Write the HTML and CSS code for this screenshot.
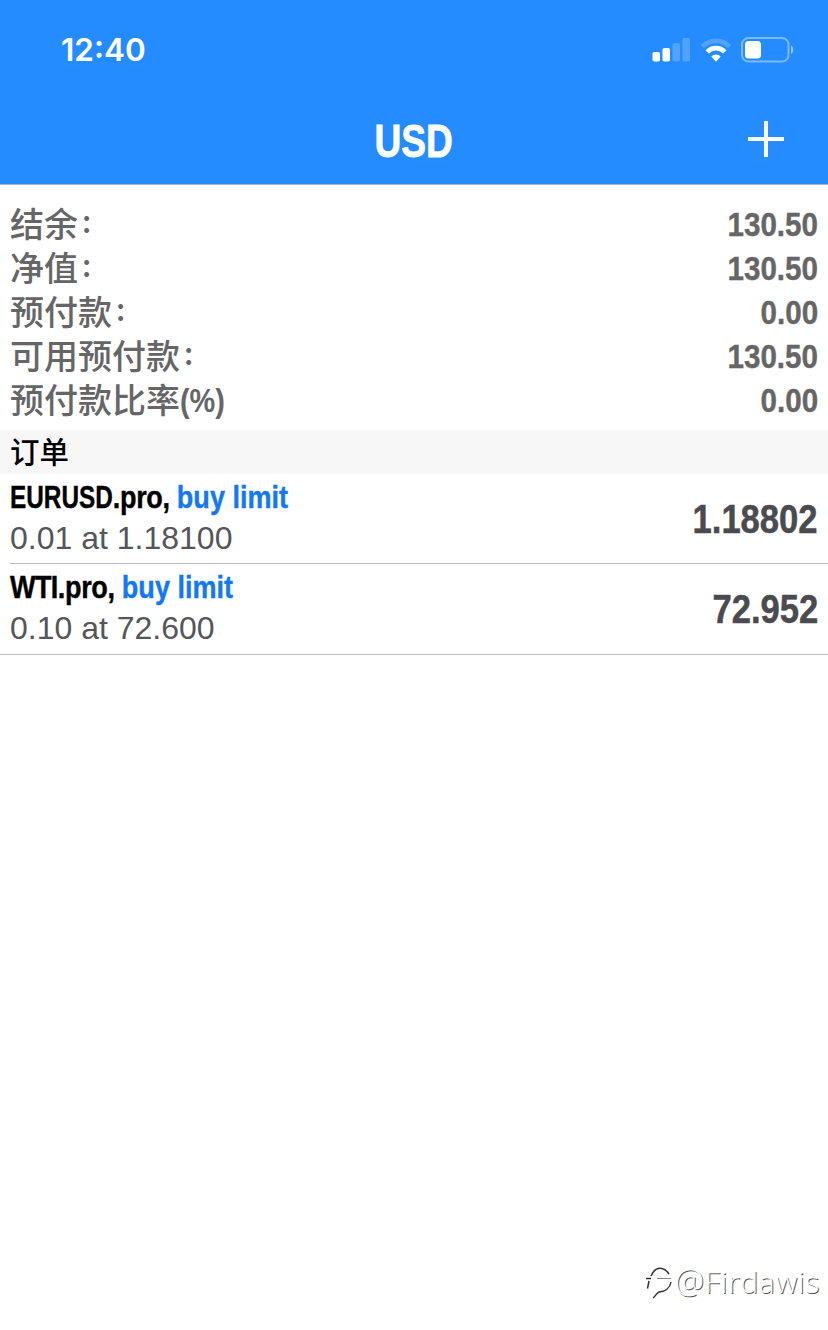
FILE: index.html
```html
<!DOCTYPE html>
<html lang="zh-CN">
<head>
    <meta charset="UTF-8">
    <meta name="viewport" content="width=device-width, initial-scale=1.0">
    <title>USD</title>
    <link rel="stylesheet" href="styles.css">
</head>
<body>
    <header class="header">
        <div class="status-bar">
            <span class="time">12:40</span>
            <div class="status-icons">
                <svg class="signal" width="38" height="24" viewBox="0 0 38 24" fill="#fff">
                    <rect x="0.5" y="14" width="7.5" height="9.5" rx="1.8"/>
                    <rect x="10.5" y="10" width="7.5" height="13.5" rx="1.8"/>
                    <rect x="20.5" y="5" width="7.5" height="18.5" rx="1.8" opacity=".2"/>
                    <rect x="30.5" y="0" width="7.5" height="23.5" rx="1.8" opacity=".2"/>
                </svg>
                <svg class="wifi" width="32" height="26" viewBox="0 0 32 26" fill="none" stroke="#fff">
                    <path d="M2.5 9.5a19 19 0 0 1 27 0" stroke-width="4.6" opacity=".2"/>
                    <path d="M7.2 14.8a12.4 12.4 0 0 1 17.6 0" stroke-width="4.6"/>
                    <path d="M11.3 19.4a6.8 6.8 0 0 1 9.4 0L16 24.8z" fill="#fff" stroke="none"/>
                </svg>
                <svg class="battery" width="54" height="26" viewBox="0 0 54 26">
                    <rect x="1" y="1" width="46.5" height="23.5" rx="6.5" fill="none" stroke="#fff" stroke-width="2" opacity=".4"/>
                    <rect x="4" y="4" width="16" height="17.5" rx="3.5" fill="#fff"/>
                    <path d="M50 8.5c3 1.5 3 7 0 8.5z" fill="#fff" opacity=".5"/>
                </svg>
            </div>
        </div>
        <div class="nav-bar">
            <h1 class="title">USD</h1>
            <svg class="add" width="36" height="36" viewBox="0 0 36 36" stroke="#fff" stroke-width="4">
                <path d="M0 18h36M18 0v36"/>
            </svg>
        </div>
    </header>

    <section class="summary">
        <div class="row"><span class="label">结余<i class="colon">:</i></span><span class="value">130.50</span></div>
        <div class="row"><span class="label">净值<i class="colon">:</i></span><span class="value">130.50</span></div>
        <div class="row"><span class="label">预付款<i class="colon">:</i></span><span class="value">0.00</span></div>
        <div class="row"><span class="label">可用预付款<i class="colon">:</i></span><span class="value">130.50</span></div>
        <div class="row"><span class="label">预付款比率<span class="percent">(%)</span></span><span class="value">0.00</span></div>
    </section>

    <h2 class="section-title">订单</h2>

    <ul class="orders">
        <li class="order">
            <div class="order-info">
                <div class="symbol"><span class="pair">EURUSD</span><span class="suffix">.pro, </span><span class="type">buy limit</span></div>
                <div class="volume">0.01 at 1.18100</div>
            </div>
            <div class="price">1.18802</div>
        </li>
        <li class="order">
            <div class="order-info">
                <div class="symbol"><span class="commodity">WTI</span><span class="suffix">.pro, </span><span class="type">buy limit</span></div>
                <div class="volume">0.10 at 72.600</div>
            </div>
            <div class="price">72.952</div>
        </li>
    </ul>

    <footer class="watermark">
        <svg class="watermark-logo" width="28" height="34" viewBox="0 0 28 34" fill="none" stroke="#333" stroke-width="1.5">
            <path d="M5 11c3-7 7-8.500 11-7.500 3 .5 5 2.500 7 5.500"/>
            <path d="M0 13.500h5M3 16l-1.500 7.500"/>
            <path d="M11 13.500h14" stroke="#888" stroke-width="1"/>
            <path d="M25 17c-1 6-6 9.500-12 10-2 .5-3 3.500-6 6"/>
        </svg>
        <span class="watermark-name"><span class="at">@</span>Firdawis</span>
    </footer>
</body>
</html>
```

FILE: styles.css
```css
:root {
    --primary-color: #258cff;
    --link-color: #1479f0;
    --text-secondary: #666666;
    --text-dark: #4a4a4f;
    --line-color: #bdbdc0;
}

* {
    margin: 0;
    padding: 0;
    box-sizing: border-box;
}

body {
    display: flex;
    flex-direction: column;
    min-height: 1330px;
    background-color: #fff;
    font-family: "Liberation Sans", "Noto Sans CJK SC", sans-serif;
}

.header {
    height: 185px;
    background-color: var(--primary-color);
    border-bottom: 1px solid #a5b5ca;
    color: #fff;
}

.status-bar {
    display: flex;
    justify-content: space-between;
    align-items: center;
    height: 99px;
    padding: 0 33px 0 61px;
}

.time {
    font-family: Inter, sans-serif;
    font-size: 31.5px;
    font-weight: 600;
}

.status-icons {
    display: flex;
    align-items: center;
}

.wifi {
    margin: 0 9px 0 10px;
}

.nav-bar {
    display: grid;
    grid-template-columns: 1fr auto 1fr;
    align-items: center;
    height: 80px;
    padding: 0 44px;
}

.title {
    grid-column: 2;
    font-size: 47px;
    line-height: 80px;
    padding-top: 2px;
    transform: scaleX(0.79);
    -webkit-text-stroke: 0.8px;
}

.add {
    justify-self: end;
    margin-bottom: 2px;
}

.summary {
    padding: 17px 10px 8px;
    color: var(--text-secondary);
}

.row {
    display: flex;
    justify-content: space-between;
    height: 44px;
    line-height: 44px;
}

.label {
    font-family: "Noto Sans CJK SC", sans-serif;
    font-size: 34px;
    font-weight: 500;
    line-height: 42px;
}

.colon {
    margin-left: 4px;
    font-style: normal;
    font-size: 31px;
    line-height: 0;
    vertical-align: 4px;
}

.percent {
    display: inline-block;
    font-family: "Liberation Sans", sans-serif;
    font-weight: bold;
    line-height: 36px;
    vertical-align: 1px;
    transform: scaleX(0.85);
    transform-origin: left;
}

.value {
    font-size: 34px;
    font-weight: bold;
    transform: scaleX(0.87);
    transform-origin: right;
    -webkit-text-stroke: 0.4px;
}

.section-title {
    height: 44px;
    padding-left: 10px;
    background-color: #f7f7f7;
    font-family: "Noto Sans CJK SC", sans-serif;
    font-size: 29.5px;
    font-weight: 500;
    line-height: 41px;
}

.orders {
    list-style: none;
    border-bottom: 1px solid var(--line-color);
}

.order {
    display: flex;
    justify-content: space-between;
    height: 90px;
    margin-left: 10px;
    padding-right: 10px;
}

.order:first-child {
    border-bottom: 1px solid var(--line-color);
}

.symbol {
    height: 46px;
    font-size: 32px;
    font-weight: bold;
    line-height: 46px;
    white-space: pre;
    transform: scaleX(0.845);
    transform-origin: left;
    -webkit-text-stroke: 0.4px;
}

.pair {
    display: inline-block;
    margin-right: -13.5px;
    transform: scaleX(0.9);
    transform-origin: left;
}

.commodity {
    letter-spacing: -0.7px;
}

.suffix {
    letter-spacing: -0.4px;
}

.type {
    color: var(--link-color);
}

.volume {
    color: #55555a;
    font-size: 32px;
    line-height: 36px;
}

.price {
    color: var(--text-dark);
    font-size: 40px;
    font-weight: bold;
    line-height: 91px;
    transform: scaleX(0.865);
    transform-origin: right;
    -webkit-text-stroke: 0.5px;
}

.watermark {
    display: flex;
    justify-content: flex-end;
    align-items: center;
    margin-top: auto;
    padding: 0 8px 28px 0;
    color: #fff;
    font-family: "Open Sans", sans-serif;
    font-size: 30px;
    font-weight: 300;
    line-height: 40px;
    letter-spacing: 0.7px;
    text-shadow: 1px 1px 0 #555;
}

.watermark-logo {
    margin-right: 1px;
}

.at {
    font-size: 33px;
    line-height: 30px;
}
```
